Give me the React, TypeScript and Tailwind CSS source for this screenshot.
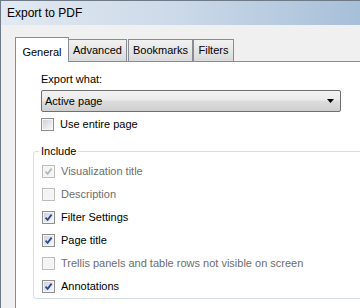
import React from "react";

const font = { fontFamily: '"Liberation Sans", Arial, sans-serif' };

function Check({ checked, disabled }: { checked?: boolean; disabled?: boolean }) {
  return (
    <div
      className={
        "flex h-[13px] w-[13px] shrink-0 items-center justify-center border p-px " +
        (disabled ? "border-[#bcbcbc] bg-[#f7f7f7]" : "border-[#8e8f8f] bg-[#f4f4f4]")
      }
    >
      <div
        className={
          "flex h-full w-full items-center justify-center " +
          (disabled
            ? "bg-[#f4f4f4]"
            : "bg-gradient-to-br from-[#cfd3d9] to-[#f7f7f7]")
        }
      >
        {checked && (
          <svg width="9" height="9" viewBox="0 0 9 9">
            <path
              d="M1.5 4.6 L3.6 6.8 L7.6 1.6"
              fill="none"
              stroke={disabled ? "#b8b8b8" : "#2c4a8c"}
              strokeWidth="1.8"
            />
          </svg>
        )}
      </div>
    </div>
  );
}

function Row({
  label,
  checked,
  disabled,
}: {
  label: string;
  checked?: boolean;
  disabled?: boolean;
}) {
  return (
    <div className="flex h-[13px] items-center gap-[6px]">
      <Check checked={checked} disabled={disabled} />
      <span
        className={
          "whitespace-nowrap text-[11px] leading-[13px] " +
          (disabled ? "text-[#6d6d6d]" : "text-black")
        }
      >
        {label}
      </span>
    </div>
  );
}

const tabBase =
  "flex h-[22px] items-center justify-center border border-b-0 border-[#898c95] bg-gradient-to-b from-[#f2f2f2] to-[#dadada] text-[11px] text-black";

export default function App() {
  return (
    <div
      style={font}
      className="relative h-[308px] w-[360px] overflow-hidden border-l border-t border-[#6f7a88] bg-[#f0f0f0]"
    >
      {/* title bar */}
      <div className="flex h-[24px] items-center bg-gradient-to-r from-[#e2e9f1] via-[#cbd9e8] to-[#a7bfd9] pl-[6px] text-[12px] text-black">
        Export to PDF
      </div>

      {/* tabs */}
      <div className="ml-[14px] mt-[12px] flex h-[24px] items-end">
        <div className="relative z-10 -mb-px flex h-[25px] w-[54px] items-start justify-center border border-b-0 border-[#898c95] bg-white pt-[6px] text-[11px] text-black">
          General
        </div>
        <div className={tabBase + " -ml-px w-[59px]"}>Advanced</div>
        <div className={tabBase + " ml-px w-[65px]"}>Bookmarks</div>
        <div className={tabBase + " w-[41px]"}>Filters</div>
      </div>

      {/* panel */}
      <div className="ml-[14px] h-[300px] w-[360px] border-l border-t border-[#898c95] bg-white pl-[25px] pt-[10px]">
        <div className="text-[11px] leading-[14px] text-black">Export what:</div>
        <div className="mt-[4px] flex h-[22px] w-[300px] items-center justify-between rounded-[2px] border border-[#707070] bg-[linear-gradient(#f2f2f2_0%,#ebebeb_45%,#dddddd_50%,#cfcfcf_100%)] pl-[3px] pr-[6px] text-[11px] text-black">
          <span>Active page</span>
          <svg width="7" height="4" viewBox="0 0 7 4">
            <path d="M0 0 H7 L3.5 4 Z" fill="#000" />
          </svg>
        </div>
        <div className="mt-[6px]">
          <Row label="Use entire page" />
        </div>

        {/* Include group */}
        <div className="relative -ml-[8px] mt-[20px] flex h-[148px] w-[380px] flex-col gap-[10px] rounded-[3px] border border-[#d5dfe5] pl-[8px] pt-[13px]">
          <span className="absolute -top-[8px] left-[5px] bg-white px-[2px] text-[11px] leading-[14px] text-black">
            Include
          </span>
          <Row label="Visualization title" checked disabled />
          <Row label="Description" disabled />
          <Row label="Filter Settings" checked />
          <Row label="Page title" checked />
          <Row label="Trellis panels and table rows not visible on screen" disabled />
          <Row label="Annotations" checked />
        </div>
      </div>
    </div>
  );
}
